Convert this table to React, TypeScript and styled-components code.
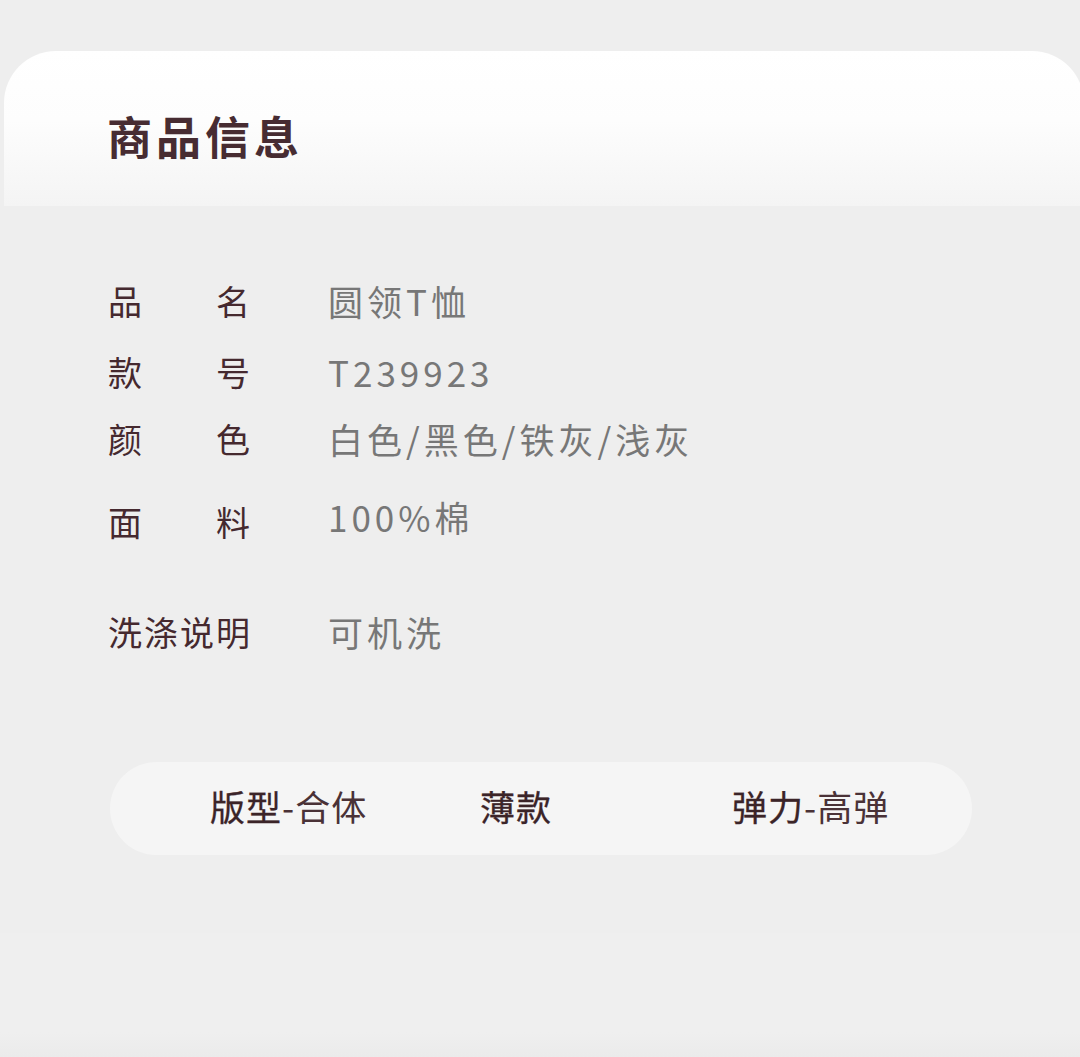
import React from 'react';
import styled, { createGlobalStyle } from 'styled-components';

const GlobalStyle = createGlobalStyle`
  html, body {
    margin: 0;
    padding: 0;
    background: #eeeeee;
  }
  body {
    font-family: "Noto Sans CJK SC", "Noto Sans", sans-serif;
    overflow: hidden;
  }
`;

type Row = { label: string; value: string; space: number; raise?: number };

const rows: Row[] = [
  { label: '品名', value: '圆领T恤', space: 0 },
  { label: '款号', value: 'T239923', space: 23 },
  { label: '颜色', value: '白色/黑色/铁灰/浅灰', space: 19 },
  { label: '面料', value: '100%棉', space: 35, raise: 10 },
  { label: '洗涤说明', value: '可机洗', space: 62 },
];

const tags = [
  { main: '版型', sub: '-合体' },
  { main: '薄款', sub: '' },
  { main: '弹力', sub: '-高弹' },
];

const App = () => {
  return (
    <Page>
      <GlobalStyle />
      <HeaderCard>
        <Title>商品信息</Title>
      </HeaderCard>
      <InfoList>
        {rows.map((r) => (
          <InfoRow key={r.label} $space={r.space}>
            <Label>{r.label}</Label>
            <Value $raise={r.raise || 0}>{r.value}</Value>
          </InfoRow>
        ))}
      </InfoList>
      <TagPill>
        {tags.map((t) => (
          <Tag key={t.main}>
            <TagMain>{t.main}</TagMain>
            {t.sub && <TagSub>{t.sub}</TagSub>}
          </Tag>
        ))}
      </TagPill>
      <Footer />
    </Page>
  );
};

export default App;

const Page = styled.div`
  width: 1080px;
  height: 1057px;
  padding-top: 51px;
  box-sizing: border-box;
  display: flex;
  flex-direction: column;
  overflow: hidden;
`;

const HeaderCard = styled.div`
  margin-left: 4px;
  margin-right: -4px;
  height: 155px;
  flex-shrink: 0;
  border-radius: 52px 52px 0 0;
  background: linear-gradient(180deg, #ffffff 0%, #fdfdfd 45%, #f4f4f4 100%);
  display: flex;
  align-items: center;
  padding-left: 103px;
`;

const Title = styled.h1`
  margin: 0;
  font-size: 45px;
  font-weight: 700;
  letter-spacing: 4px;
  color: #472c32;
  line-height: 1;
  padding-top: 14px;
`;

const InfoList = styled.div`
  margin-top: 71px;
  padding-left: 108px;
  display: flex;
  flex-direction: column;
`;

const InfoRow = styled.div<{ $space: number }>`
  display: flex;
  align-items: center;
  margin-top: ${(p) => p.$space}px;
  height: 48px;
`;

const Label = styled.div`
  width: 142px;
  font-size: 34px;
  line-height: 48px;
  color: #45292f;
  text-align: justify;
  text-align-last: justify;
`;

const Value = styled.div<{ $raise: number }>`
  margin-left: 78px;
  margin-bottom: ${(p) => p.$raise}px;
  font-size: 35px;
  line-height: 48px;
  letter-spacing: 4px;
  color: #777777;
`;

const TagPill = styled.div`
  margin-top: 106px;
  margin-left: 110px;
  width: 862px;
  height: 93px;
  flex-shrink: 0;
  border-radius: 47px;
  background: #f5f5f5;
  display: grid;
  grid-template-columns: 270px 252px auto;
  align-items: center;
  padding-left: 100px;
  padding-bottom: 6px;
  box-sizing: border-box;
`;

const Tag = styled.div`
  font-size: 35px;
  line-height: 48px;
  letter-spacing: 1px;
  white-space: nowrap;
`;

const TagMain = styled.span`
  color: #3b2428;
  font-weight: 400;
  -webkit-text-stroke: 0.3px #3b2428;
`;

const TagSub = styled.span`
  color: #4a3237;
  font-weight: 400;
`;

const Footer = styled.div`
  flex: 1;
  margin-top: 78px;
  background: linear-gradient(180deg, #efefef 0%, #efefef 80%, #ebebeb 100%);
`;
